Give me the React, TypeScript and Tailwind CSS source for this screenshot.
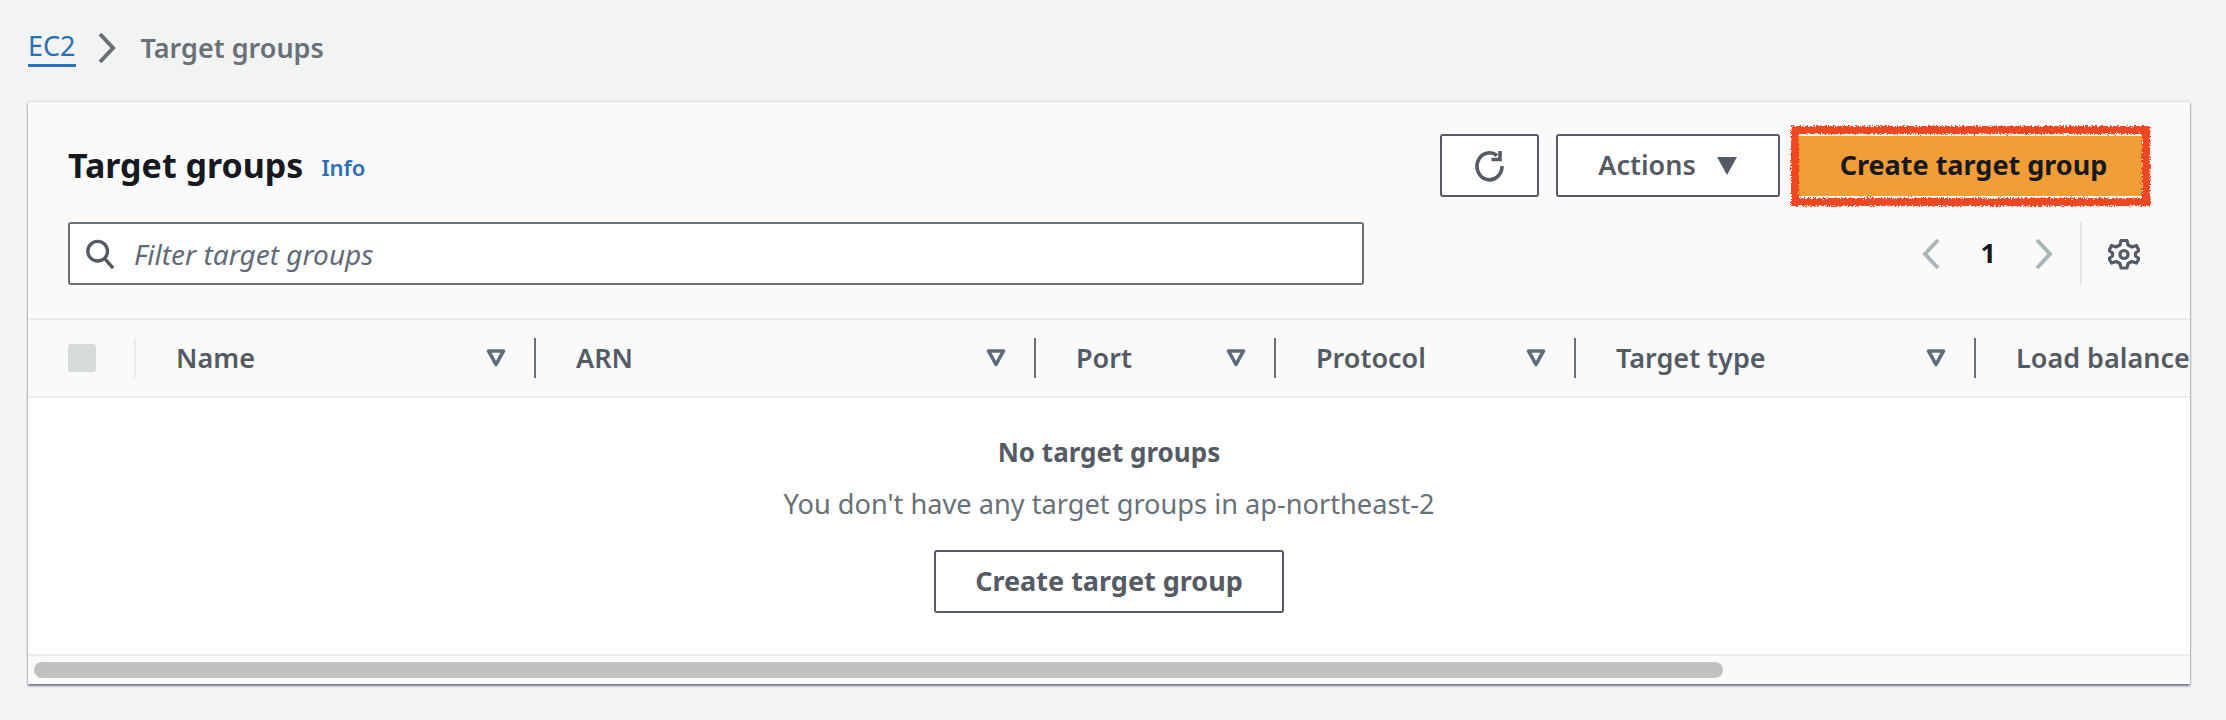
import React from 'react';

const columns = [
  { name: 'Name', width: 'w-[400px]' },
  { name: 'ARN', width: 'w-[500px]' },
  { name: 'Port', width: 'w-[240px]' },
  { name: 'Protocol', width: 'w-[300px]' },
  { name: 'Target type', width: 'w-[400px]' },
];

function Chevron({ dir, className }: { dir: 'left' | 'right'; className: string }) {
  return (
    <svg viewBox="0 0 20 32" className={className} fill="none" stroke="currentColor" strokeWidth="4">
      <path d={dir === 'right' ? 'M3 2 L16 16 L3 30' : 'M17 2 L4 16 L17 30'} />
    </svg>
  );
}

function SortIcon() {
  return (
    <svg viewBox="0 0 20 18" className="w-5 h-[18px] text-[#5f6b7a]" fill="none" stroke="currentColor" strokeWidth="3.6">
      <path d="M2.5 2 H17.5 L10 15.5 Z" strokeLinejoin="round" />
    </svg>
  );
}

function RefreshIcon() {
  return (
    <svg viewBox="0 0 32 32" className="w-8 h-[32px] text-[#545b64]" fill="none" stroke="currentColor" strokeWidth="3.6">
      <path d="M28 16 A 12.5 13.5 0 1 1 23 5.5" />
      <path d="M26 1 V 9.5 H 17.5" />
    </svg>
  );
}

function GearIcon() {
  return (
    <svg viewBox="0 0 32 32" className="w-8 h-8 text-[#545b64]" fill="none" stroke="currentColor" strokeWidth="3.2" strokeLinejoin="round">
      <path d="M13 2.5 H19 L20 7 L24 9 L28.5 7.5 L31 12.5 L27.5 15 V18 L31 20.5 L28.5 25 L24 23.5 L20 25.5 L19 30 H13 L12 25.5 L8 23.5 L3.5 25 L1 20.5 L4.5 18 V15 L1 12.5 L3.5 7.5 L8 9 L12 7 Z" />
      <circle cx="16" cy="16.5" r="4" />
    </svg>
  );
}

function SearchIcon() {
  return (
    <svg viewBox="0 0 32 32" className="w-[30px] h-[32px] text-[#545b64]" fill="none" stroke="currentColor" strokeWidth="3.6">
      <circle cx="13.5" cy="13" r="10.5" />
      <path d="M21 21 L30 31" />
    </svg>
  );
}

// hand drawn red marker box from the annotated screenshot
function MarkerBox() {
  return (
    <svg className="absolute -left-[7px] -top-[11px] w-[361px] h-[82px] pointer-events-none" viewBox="0 0 361 82">
      <defs>
        <filter id="rough" x="-5%" y="-20%" width="110%" height="140%">
          <feTurbulence type="fractalNoise" baseFrequency="0.7" numOctaves="2" seed="4" />
          <feDisplacementMap in="SourceGraphic" scale="6" />
        </filter>
      </defs>
      <rect x="5" y="5" width="351" height="72" fill="none" stroke="#ee4723" strokeWidth="8" filter="url(#rough)" />
    </svg>
  );
}

export default function App() {
  return (
    <div className="h-[720px] w-[2226px] overflow-hidden bg-[#f2f3f3] font-['Noto_Sans',sans-serif] text-[#545b64]">
      <div className="flex h-[102px] items-start pl-[28px] pt-[27px]">
        <a className="border-b-[3px] border-[#2a6fb8] text-[27px] leading-[37px] text-[#2a6fb8]">EC2</a>
        <Chevron dir="right" className="ml-[21px] mt-[5px] h-[32px] w-[20px] text-[#687078]" />
        <span className="ml-[24px] text-[27px] font-semibold leading-[41px] text-[#687078]">Target groups</span>
      </div>

      <div className="mx-[28px] h-[582px] w-[2162px] overflow-hidden bg-white shadow-[0_2px_2px_rgba(70,80,100,0.75),0_0_2px_rgba(70,80,100,0.35)]">
        <div className="h-[216px] bg-[#fafafa] px-[40px] pt-[32px]">
          <div className="flex h-[63px] items-center">
            <h1 className="mb-[2px] text-[34px] font-bold leading-none text-[#16191f]">Target groups</h1>
            <a className="ml-[18px] mt-[3px] text-[22px] font-semibold text-[#2a6fb8]">Info</a>
            <div className="ml-auto flex items-center">
              <button className="flex h-[63px] w-[99px] items-center justify-center rounded-[3px] border-2 border-[#545b64] bg-white">
                <RefreshIcon />
              </button>
              <button className="ml-[17px] flex h-[63px] w-[224px] items-center justify-center gap-[20px] rounded-[3px] border-2 border-[#545b64] bg-white text-[27px] font-semibold">
                Actions
                <svg viewBox="0 0 20 18" className="h-[18px] w-[22px] fill-[#545b64]"><path d="M0 0 H20 L10 18 Z" /></svg>
              </button>
              <div className="relative ml-[17px] mr-[8px]">
                <button className="flex h-[60px] w-[345px] items-center justify-center bg-[#f29e36] pl-[8px] text-[27px] font-bold text-[#16191f]">
                  Create target group
                </button>
                <MarkerBox />
              </div>
            </div>
          </div>

          <div className="mt-[25px] flex h-[63px] items-center">
            <div className="flex h-[63px] w-[1296px] items-center gap-[19px] rounded-[3px] border-2 border-[#687078] bg-white pl-[15px]">
              <SearchIcon />
              <span className="text-[28px] italic text-[#5f6b7a]">Filter target groups</span>
            </div>
            <div className="ml-auto mr-[10px] flex h-[63px] items-center">
              <Chevron dir="left" className="h-[32px] w-[20px] text-[#aab7b8]" />
              <span className="ml-[40px] text-[27px] font-bold text-[#16191f]">1</span>
              <Chevron dir="right" className="ml-[38px] h-[32px] w-[20px] text-[#aab7b8]" />
              <div className="ml-[26px] h-[63px] w-[2px] bg-[#e5e8e8]" />
              <div className="ml-[26px]"><GearIcon /></div>
            </div>
          </div>
        </div>

        <div className="flex h-[80px] w-[2400px] items-center border-y-2 border-[#eaeded] bg-[#fafafa]">
          <div className="flex h-[40px] w-[108px] shrink-0 items-center justify-between pl-[40px]">
            <div className="h-[28px] w-[28px] rounded-[3px] bg-[#d5dbdb]" />
            <div className="h-[40px] w-[2px] bg-[#eaeded]" />
          </div>
          {columns.map(c => (
            <div key={c.name} className={`${c.width} flex h-[40px] shrink-0 items-center justify-between border-r-2 border-[#687078] pl-[40px] pr-[28px] text-[27px] font-semibold`}>
              <span>{c.name}</span>
              <SortIcon />
            </div>
          ))}
          <div className="pl-[40px] text-[27px] font-semibold">Load balancer</div>
        </div>

        <div className="flex h-[256px] flex-col items-center bg-white">
          <p className="mt-[36px] text-[26px] font-bold leading-[36px]">No target groups</p>
          <p className="mt-[16px] text-[27.2px] leading-[36px] text-[#687078]">You don't have any target groups in ap-northeast-2</p>
          <button className="mt-[28px] flex h-[63px] w-[350px] items-center justify-center rounded-[3px] border-2 border-[#545b64] bg-white text-[27px] font-bold">
            Create target group
          </button>
        </div>

        <div className="h-[30px] border-t-2 border-[#eaeded] bg-[#fafafa] pl-[6px] pt-[6px]">
          <div className="h-[16px] w-[1689px] rounded-full bg-[#c1c1c1]" />
        </div>
      </div>
    </div>
  );
}
